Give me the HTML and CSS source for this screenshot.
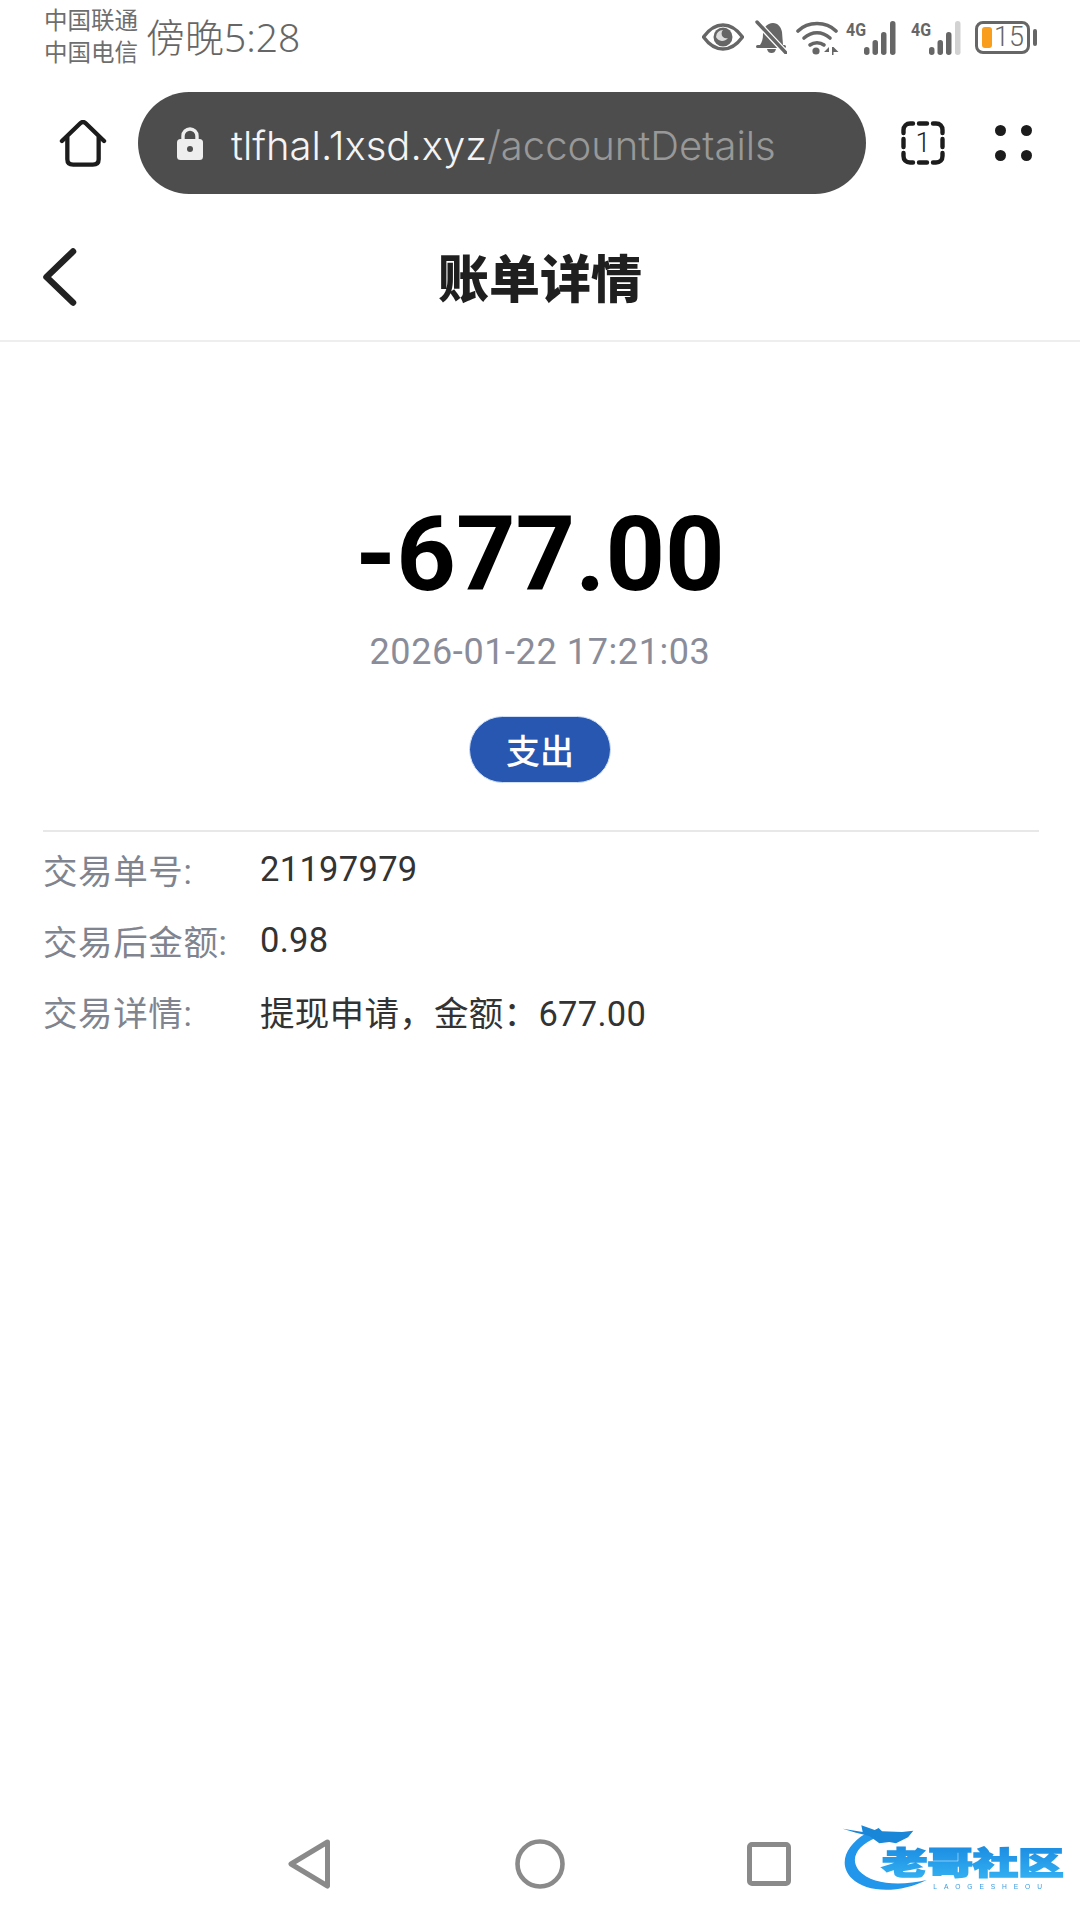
FILE: index.html
```html
<!DOCTYPE html>
<html lang="zh">
<head>
    <meta charset="UTF-8">
    <meta name="viewport" content="width=device-width, initial-scale=1.0">
    <link rel="stylesheet" href="styles.css">
    <title>账单详情</title>
</head>
<body>
<div class="page">
    <div class="status">
        <div class="carriers"><span>中国联通</span><span>中国电信</span></div>
        <div class="clock">傍晚5:28</div>
        <div class="status-icons">
            <svg class="ic-eye" viewBox="0 0 42 28"><path d="M1.500 14C8 5 14 2 21 2s13 3 19.500 12C34 23 28 26 21 26S8 23 1.500 14z" fill="none" stroke="#666" stroke-width="3.400" stroke-linejoin="round"/><circle cx="21" cy="14" r="9.500" fill="#666"/><path d="M14 14a7 7 0 0 1 7-7 5 5 0 0 0 0 7 5 5 0 0 0 5 1 7 7 0 0 1-12-1z" fill="#ddd"/></svg>
            <svg class="ic-bell" viewBox="0 0 32 34"><path d="M5 25c2-3 3-6 3-11 0-6 4-11 10-11 5 0 8 4 9 9l1 13z" fill="#666"/><rect x="1" y="25" width="30" height="3" rx="1.500" fill="#666"/><path d="M12 29h9c-1 3-2 4-4.500 4S13 32 12 29z" fill="#666"/><path d="M2 2l29 31" stroke="#fff" stroke-width="6"/><path d="M2 2l29 31" stroke="#666" stroke-width="3.400" stroke-linecap="round"/></svg>
            <svg class="ic-wifi" viewBox="0 0 43 35"><g fill="none" stroke="#666" stroke-width="3.600" stroke-linecap="round"><path d="M2 11C12 1 30 1 40 11"/><path d="M8 18c8-7 18-7 26 0"/><path d="M14 25c4-3 10-3 14 0"/></g><circle cx="20" cy="31" r="3.600" fill="#666"/><path d="M33 27l-5 5h5zM36 27v8h1.500v-3l5 0-5-5z" fill="#666"/></svg>
            <svg class="ic-signal" viewBox="0 0 54 38"><text x="0" y="18" class="net" textLength="20" lengthAdjust="spacingAndGlyphs">4G</text><g fill="#666"><rect x="18" y="29" width="5.500" height="8" rx="2.700"/><rect x="26.500" y="22" width="5.500" height="15" rx="2.700"/><rect x="35" y="14" width="5.500" height="23" rx="2.700"/><rect x="44" y="3" width="5.500" height="34" rx="2.700"/></g></svg>
            <svg class="ic-signal" viewBox="0 0 54 38"><text x="0" y="18" class="net" textLength="20" lengthAdjust="spacingAndGlyphs">4G</text><g fill="#666"><rect x="18" y="29" width="5.500" height="8" rx="2.700"/><rect x="26.500" y="22" width="5.500" height="15" rx="2.700"/><rect x="35" y="14" width="5.500" height="23" rx="2.700"/></g><rect x="44" y="3" width="5.500" height="34" rx="2.700" fill="#d2d2d2"/></svg>
            <div class="battery">
                <div class="battery-body"><i class="battery-fill"></i><span>15</span></div>
                <i class="battery-nub"></i>
            </div>
        </div>
    </div>

    <div class="toolbar">
        <svg class="ic-home" viewBox="0 0 48 48"><path d="M2.500 21.500L21 3.500c2-2 4-2 6 0l18.500 18" fill="none" stroke="#1c1c1c" stroke-width="4.400" stroke-linecap="round"/><path d="M8 17v23c0 4 2 5.500 6 5.500h20c4 0 6-1.500 6-5.500V17" fill="none" stroke="#1c1c1c" stroke-width="4.400"/></svg>
        <div class="address">
            <svg class="ic-lock" viewBox="0 0 26 33"><path d="M6 14V9a7 7 0 0 1 14 0v5" fill="none" stroke="#eee" stroke-width="3.400"/><rect x="0" y="12" width="26" height="21" rx="3.500" fill="#eee"/><circle cx="13" cy="22" r="3" fill="#4d4d4d"/></svg>
            <span class="host">tlfhal.1xsd.xyz</span><span class="path">/accountDetails</span>
        </div>
        <div class="tabs">
            <svg class="tabs-frame" viewBox="0 0 44 44"><path d="M2.500 12V9c0-4 3-6.500 6.500-6.500h3M18 2.500h8M32 2.500h3c4 0 6.500 2.500 6.500 6.500v3M41.500 18v8M41.500 32v3c0 4-2.500 6.500-6.500 6.500h-3M26 41.500h-8M12 41.500H9c-4 0-6.500-2.500-6.500-6.500v-3M2.500 26v-8" fill="none" stroke="#1c1c1c" stroke-width="4.400" stroke-linecap="round"/></svg>
            <span>1</span>
        </div>
        <div class="menu"><i></i><i></i><i></i><i></i></div>
    </div>

    <div class="header">
        <svg class="ic-back" viewBox="0 0 36 58"><path d="M31 3.500L4.500 29 31 54.500" fill="none" stroke="#222" stroke-width="6.500" stroke-linecap="round" stroke-linejoin="round"/></svg>
        <h1>账单详情</h1>
    </div>

    <div class="summary">
        <div class="amount">-677.00</div>
        <div class="date">2026-01-22 17:21:03</div>
        <div class="tag">支出</div>
    </div>

    <div class="details">
        <div class="row"><span class="key">交易单号:</span><span class="val">21197979</span></div>
        <div class="row"><span class="key">交易后金额:</span><span class="val">0.98</span></div>
        <div class="row"><span class="key">交易详情:</span><span class="val">提现申请，金额：677.00</span></div>
    </div>

    <div class="nav">
        <svg class="ic-nav-back" viewBox="0 0 44 50"><path d="M39.500 3L3 25l36.500 22z" fill="none" stroke="#8a8a8a" stroke-width="5" stroke-linejoin="round"/></svg>
        <svg class="ic-nav-home" viewBox="0 0 50 50"><circle cx="25" cy="25" r="22.500" fill="none" stroke="#8a8a8a" stroke-width="4.600"/></svg>
        <svg class="ic-nav-recent" viewBox="0 0 44 44"><rect x="2.500" y="2.500" width="39" height="39" rx="2.500" fill="none" stroke="#8a8a8a" stroke-width="5"/></svg>
    </div>

    <svg class="watermark" viewBox="0 0 780 330">
        <defs>
            <linearGradient id="wm" x1="0" y1="0" x2="0" y2="1">
                <stop offset="0" stop-color="#1784de"/>
                <stop offset="1" stop-color="#35b4f4"/>
            </linearGradient>
        </defs>
        <path d="M135 72C80 105 52 160 95 205c45 45 145 45 225 5-80 18-165 14-203-28-28-35-8-75 55-100z" fill="#2196ea"/>
        <path d="M68 56l60 10-4-20 40 14 12-6 10 10 60 2 34-4-16 20-36 18-20-4-30 4-30-22-40-10z" fill="#1a86d8"/>
        <text x="186" y="192" class="wm-cn" fill="url(#wm)" stroke="url(#wm)" stroke-width="5" textLength="545" lengthAdjust="spacingAndGlyphs">老哥社区</text>
        <text x="340" y="236" class="wm-en" textLength="326">LAOGESHEOU</text>
    </svg>
</div>
</body>
</html>
```

FILE: styles.css
```css
*{box-sizing:border-box;}
body{margin:0;background:#fff;font-family:Roboto,"Noto Sans CJK SC",sans-serif;}
.page{position:relative;width:1080px;height:1920px;display:flex;flex-direction:column;overflow:hidden;}

.status{height:74px;padding:0 43px 0 44px;display:flex;align-items:center;color:#666;}
.carriers{display:flex;flex-direction:column;font-size:23.500px;line-height:32px;color:#6e6e6e;}
.clock{margin-left:8px;font-size:39px;line-height:74px;font-family:"Noto Sans","Noto Sans CJK SC",sans-serif;font-weight:300;}
.status-icons{margin-left:auto;display:flex;align-items:center;}
.ic-eye{width:42px;height:28px;}
.ic-bell{width:32px;height:34px;margin-left:11px;}
.ic-wifi{width:43px;height:35px;margin-left:9px;}
.ic-signal{width:54px;height:38px;margin-left:7px;}
.ic-signal + .ic-signal{margin-left:11px;}
.net{font:700 19px Roboto,sans-serif;fill:#666;}
.battery{display:flex;align-items:center;margin-left:10px;}
.battery-body{width:55px;height:33px;border:3px solid #666;border-radius:8px;display:flex;align-items:center;padding-left:4px;font-size:27px;font-weight:300;color:#666;}
.battery-fill{width:10px;height:21px;background:#f99d1c;border-radius:3px;margin-right:2px;}
.battery-nub{width:4px;height:17px;background:#666;border-radius:2px;margin-left:3px;}

.toolbar{height:138px;display:flex;align-items:center;}
.ic-home{width:48px;height:47px;margin-left:59px;}
.address{width:728px;height:102px;margin-left:31px;border-radius:51px;background:#4d4d4d;display:flex;align-items:center;padding-left:39px;font-family:Inter,sans-serif;font-size:40px;font-weight:300;}
.ic-lock{width:26px;height:33px;margin-right:28px;}
.host{margin-top:4px;color:#f4f4f4;}
.path{margin-top:4px;color:#989898;}
.tabs{position:relative;width:44px;height:44px;margin-left:35px;display:flex;align-items:center;justify-content:center;font-size:27px;font-weight:300;color:#1c1c1c;}
.tabs-frame{position:absolute;left:0;top:0;width:44px;height:44px;}
.menu{width:37px;margin-left:50px;display:grid;grid-template-columns:11px 11px;justify-content:space-between;row-gap:14px;}
.menu i{width:11px;height:11px;border-radius:50%;background:#1c1c1c;}

.header{position:relative;height:130px;border-bottom:2px solid #eee;display:flex;align-items:center;justify-content:center;}
.header h1{margin:0;font-size:51px;font-weight:900;color:#1f1f1f;}
.ic-back{position:absolute;left:42px;top:36px;width:36px;height:58px;}

.summary{padding-top:151px;display:flex;flex-direction:column;align-items:center;}
.amount{font-size:104px;line-height:124px;font-weight:700;color:#000;}
.date{margin-top:12px;font-size:36px;line-height:46px;letter-spacing:.6px;color:#8a8d99;}
.tag{width:142px;height:67px;margin-top:41px;border-radius:34px;background:#2757b0;border:1px solid #cfe0f8;color:#fff;font-size:34px;font-weight:500;display:flex;align-items:center;justify-content:center;}

.details{margin:47px 41px 0 43px;padding-top:1px;border-top:2px solid #e8e8e8;}
.row{height:71px;display:flex;align-items:center;font-size:34.500px;}
.key{width:217px;letter-spacing:.6px;color:#80848f;}
.val{letter-spacing:.3px;color:#333;}

.nav{margin-top:auto;height:100px;padding:0 0 12px 288px;display:flex;align-items:center;}
.ic-nav-back{width:44px;height:50px;}
.ic-nav-home{width:50px;height:50px;margin-left:183px;}
.ic-nav-recent{width:44px;height:44px;margin-left:182px;}

.watermark{position:absolute;left:820px;top:1810px;width:260px;height:110px;filter:blur(.5px);}
.wm-cn{font-family:"Noto Sans CJK SC",sans-serif;font-weight:900;font-size:92px;}
.wm-en{font-family:"Liberation Sans",sans-serif;font-size:20px;fill:#3a9be0;}
```
